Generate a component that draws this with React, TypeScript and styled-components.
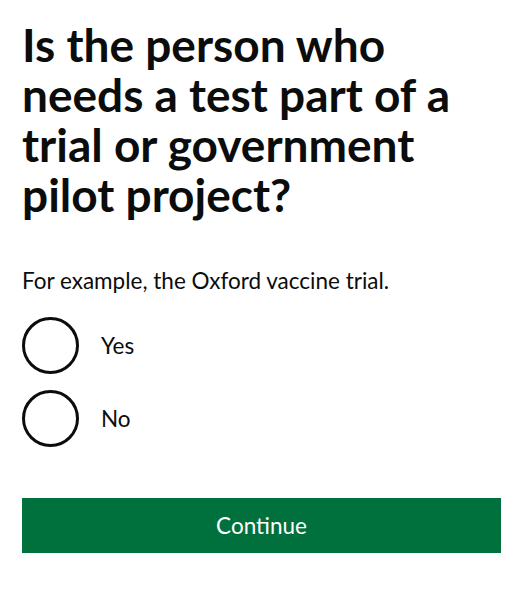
import React from 'react';
import styled, { createGlobalStyle } from 'styled-components';

const GlobalStyle = createGlobalStyle`
  body {
    margin: 0;
    background: #ffffff;
    color: #0b0c0c;
    font-family: Lato, "Noto Sans", Arial, sans-serif;
  }
`;

const Page = styled.main`
  padding: 20px 22px 0 22px;
`;

const Heading = styled.h1`
  margin: 0 0 47px 0;
  font-size: 46px;
  line-height: 50px;
  font-weight: 700;
`;

const Hint = styled.p`
  margin: 0 0 22px 0;
  font-size: 22.5px;
  line-height: 28px;
  color: #0b0c0c;
`;

const Radios = styled.div`
  display: flex;
  flex-direction: column;
  gap: 16px;
  margin-bottom: 51px;
`;

const RadioRow = styled.label`
  display: flex;
  align-items: center;
  gap: 22px;
  font-size: 22.5px;
`;

const Circle = styled.span`
  width: 57px;
  height: 57px;
  box-sizing: border-box;
  border: 3px solid #0b0c0c;
  border-radius: 50%;
  flex-shrink: 0;
`;

const Button = styled.button`
  display: block;
  width: 100%;
  height: 55px;
  border: 0;
  background: #00703c;
  box-shadow: 0 3px 0 #002d18;
  color: #ffffff;
  font-family: Lato, "Noto Sans", Arial, sans-serif;
  font-size: 22.5px;
  cursor: pointer;
`;

function App() {
  return (
    <>
      <GlobalStyle />
      <Page>
        <Heading>Is the person who needs a test part of a trial or government pilot project?</Heading>
        <Hint>For example, the Oxford vaccine trial.</Hint>
        <Radios>
          <RadioRow>
            <Circle />
            Yes
          </RadioRow>
          <RadioRow>
            <Circle />
            No
          </RadioRow>
        </Radios>
        <Button>Continue</Button>
      </Page>
    </>
  );
}

export default App;
